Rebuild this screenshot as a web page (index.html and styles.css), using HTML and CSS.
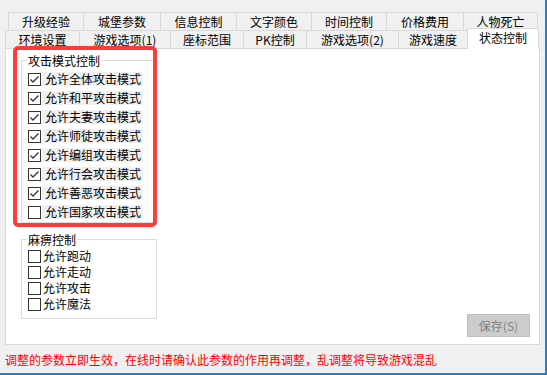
FILE: index.html
```html
<!DOCTYPE html>
<html lang="zh-CN">
<head>
<meta charset="utf-8">
<title>状态控制</title>
<link rel="stylesheet" href="styles.css">
</head>
<body>
<div class="window">
  <div class="tabs">
    <div class="tabrow row1">
      <div class="tab">升级经验</div>
      <div class="tab">城堡参数</div>
      <div class="tab">信息控制</div>
      <div class="tab">文字颜色</div>
      <div class="tab">时间控制</div>
      <div class="tab">价格费用</div>
      <div class="tab last">人物死亡</div>
    </div>
    <div class="tabrow row2">
      <div class="tab">环境设置</div>
      <div class="tab">游戏选项(1)</div>
      <div class="tab">座标范围</div>
      <div class="tab">PK控制</div>
      <div class="tab">游戏选项(2)</div>
      <div class="tab">游戏速度</div>
      <div class="tab active">状态控制</div>
    </div>
  </div>
  <div class="panel">
    <div class="groups">
      <div class="group g1">
        <span class="legend">攻击模式控制</span>
        <div class="list list1">
          <div class="row"><span class="cb checked"><svg viewBox="0 0 11 11" width="11" height="11"><polyline points="1.5,5.5 4,8 9.5,2.5"/></svg></span><span class="lbl shaded">允许全体攻击模式</span></div>
          <div class="row"><span class="cb checked"><svg viewBox="0 0 11 11" width="11" height="11"><polyline points="1.5,5.5 4,8 9.5,2.5"/></svg></span><span class="lbl shaded">允许和平攻击模式</span></div>
          <div class="row"><span class="cb checked"><svg viewBox="0 0 11 11" width="11" height="11"><polyline points="1.5,5.5 4,8 9.5,2.5"/></svg></span><span class="lbl shaded">允许夫妻攻击模式</span></div>
          <div class="row"><span class="cb checked"><svg viewBox="0 0 11 11" width="11" height="11"><polyline points="1.5,5.5 4,8 9.5,2.5"/></svg></span><span class="lbl shaded">允许师徒攻击模式</span></div>
          <div class="row"><span class="cb checked"><svg viewBox="0 0 11 11" width="11" height="11"><polyline points="1.5,5.5 4,8 9.5,2.5"/></svg></span><span class="lbl shaded">允许编组攻击模式</span></div>
          <div class="row"><span class="cb checked"><svg viewBox="0 0 11 11" width="11" height="11"><polyline points="1.5,5.5 4,8 9.5,2.5"/></svg></span><span class="lbl shaded">允许行会攻击模式</span></div>
          <div class="row"><span class="cb checked"><svg viewBox="0 0 11 11" width="11" height="11"><polyline points="1.5,5.5 4,8 9.5,2.5"/></svg></span><span class="lbl shaded">允许善恶攻击模式</span></div>
          <div class="row"><span class="cb"></span><span class="lbl shaded">允许国家攻击模式</span></div>
        </div>
      </div>
      <div class="group g2">
        <span class="legend">麻痹控制</span>
        <div class="list list2">
          <div class="row"><span class="cb"></span><span class="lbl plain">允许跑动</span></div>
          <div class="row"><span class="cb"></span><span class="lbl plain">允许走动</span></div>
          <div class="row"><span class="cb"></span><span class="lbl plain">允许攻击</span></div>
          <div class="row"><span class="cb"></span><span class="lbl plain">允许魔法</span></div>
        </div>
      </div>
    </div>
    <button class="save" type="button">保存(S)</button>
    <div class="highlight"></div>
  </div>
  <div class="note">调整的参数立即生效，在线时请确认此参数的作用再调整，乱调整将导致游戏混乱</div>
</div>
</body>
</html>
```
FILE: styles.css
```css
* { box-sizing: border-box; }
html, body { margin: 0; padding: 0; }
body {
  background: #f0f0f0;
  font-family: "Noto Sans CJK SC", "Noto Sans", sans-serif;
  font-size: 12px;
  color: #000;
}
.window {
  width: 547px;
  height: 375px;
  padding-top: 12px;
  border-right: 2px solid #1883d7;
  border-bottom: 2px solid #1883d7;
  background: #f0f0f0;
  overflow: hidden;
}
.tabrow {
  display: grid;
  grid-template-rows: 18px;
}
.row1 {
  margin-left: 8px;
  grid-template-columns: 75px 77px 76px 75px 75px 77px 75px;
}
.row2 {
  margin-left: 5px;
  grid-template-columns: 74px 91px 73px 63px 92px 69px 72px;
}
.tab {
  display: flex;
  align-items: center;
  justify-content: center;
  height: 18px;
  border-left: 1px solid #d9d9d9;
  border-top: 1px solid #d9d9d9;
  background: #f0f0f0;
  line-height: 14px;
  white-space: nowrap;
}
.tab.last { border-right: 1px solid #d9d9d9; }
.tab.active {
  position: relative;
  z-index: 2;
  align-self: start;
  margin-top: -2px;
  height: 21px;
  border-right: 1px solid #d9d9d9;
  background: #fff;
  align-items: flex-start;
  padding-top: 2px;
}
.panel {
  position: relative;
  display: flex;
  margin-left: 5px;
  width: 535px;
  height: 297px;
  border: 1px solid #d9d9d9;
  background: #fff;
}
.groups {
  display: flex;
  flex-direction: column;
  margin-left: 15px;
  margin-top: 11px;
}
.group {
  display: flex;
  flex-direction: column;
  align-items: flex-start;
  width: 136px;
  border: 1px solid #dcdcdc;
}
.g1 { height: 163px; }
.g2 { height: 80px; margin-top: 16px; }
.legend {
  display: block;
  margin-top: -7px;
  margin-left: 5px;
  padding: 0 1px;
  height: 14px;
  line-height: 14px;
  background: #fff;
}
.list {
  display: flex;
  flex-direction: column;
  margin-left: 6px;
}
.list1 { margin-top: 4px; gap: 5px; }
.list2 { margin-top: 2px; gap: 2px; }
.row {
  display: flex;
  align-items: center;
  height: 14px;
}
.cb {
  display: flex;
  align-items: center;
  justify-content: center;
  width: 13px;
  height: 13px;
  border: 1px solid #333;
  background: #fff;
  flex: none;
}
.cb svg polyline {
  fill: none;
  stroke: #333;
  stroke-width: 1.3;
}
.lbl {
  height: 14px;
  line-height: 14px;
  white-space: nowrap;
}
.shaded {
  margin-left: 1px;
  padding-left: 3px;
  width: 101px;
  background: #f0f0f0;
}
.plain { margin-left: 2px; }
.save {
  align-self: flex-end;
  margin-left: auto;
  margin-right: 9px;
  margin-bottom: 7px;
  width: 63px;
  height: 23px;
  padding: 0;
  border: 1px solid #bfbfbf;
  background: #cccccc;
  color: #838383;
  font-family: inherit;
  font-size: 12px;
  line-height: 14px;
}
.highlight {
  position: absolute;
  left: 7px;
  top: -3px;
  width: 144px;
  height: 181px;
  border: 4px solid #ff3b3b;
  border-radius: 5px;
  pointer-events: none;
}
.note {
  margin-top: 8px;
  margin-left: 5px;
  height: 14px;
  line-height: 14px;
  color: #ff0000;
  white-space: nowrap;
}
```
